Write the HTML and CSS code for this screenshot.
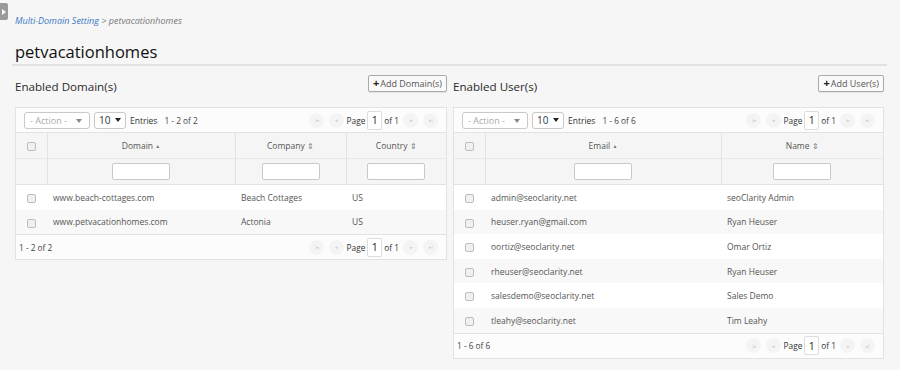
FILE: index.html
```html
<!DOCTYPE html>
<html lang="en">
<head>
    <meta charset="UTF-8">
    <meta name="viewport" content="width=device-width, initial-scale=1.0">
    <title>petvacationhomes</title>
    <link rel="stylesheet" href="styles.css">
</head>
<body>
    <div class="side-tab">
        <svg width="4" height="6" viewBox="0 0 4 6"><path d="M0 0 L4 3 L0 6 Z" fill="#fff"/></svg>
    </div>
    <div class="page">
        <div class="breadcrumb"><a href="#">Multi-Domain Setting</a> &gt; petvacationhomes</div>
        <h1 class="title">petvacationhomes</h1>

        <div class="columns">
            <!-- Domains -->
            <div class="section">
                <div class="section-head">
                    <h2>Enabled Domain(s)</h2>
                    <button class="add-btn"><span class="plus">+</span>Add Domain(s)</button>
                </div>
                <div class="panel">
                    <div class="toolbar">
                        <div class="select action">- Action -<span class="caret thin"></span></div>
                        <div class="select size">10<span class="caret"></span></div>
                        <span class="lbl entries">Entries</span>
                        <span class="lbl count">1 - 2 of 2</span>
                        <div class="pager">
                            <span class="pg">|&#9666;</span>
                            <span class="pg">&#9666;</span>
                            <span class="lbl pg-page">Page</span>
                            <span class="page-input">1</span>
                            <span class="lbl pg-of">of 1</span>
                            <span class="pg">&#9656;</span>
                            <span class="pg">&#9656;|</span>
                        </div>
                    </div>
                    <table class="grid">
                        <colgroup>
                            <col class="c-check">
                            <col style="width: 188px">
                            <col style="width: 111px">
                            <col>
                        </colgroup>
                        <thead>
                            <tr class="head-row">
                                <th><span class="cb"></span></th>
                                <th>Domain <span class="sort">&#9650;</span></th>
                                <th>Company <span class="sort both">&#8661;</span></th>
                                <th>Country <span class="sort both">&#8661;</span></th>
                            </tr>
                            <tr class="filter-row">
                                <th></th>
                                <th><span class="filter"></span></th>
                                <th><span class="filter"></span></th>
                                <th><span class="filter"></span></th>
                            </tr>
                        </thead>
                        <tbody>
                            <tr>
                                <td class="chk"><span class="cb"></span></td>
                                <td>www.beach-cottages.com</td>
                                <td>Beach Cottages</td>
                                <td>US</td>
                            </tr>
                            <tr>
                                <td class="chk"><span class="cb"></span></td>
                                <td>www.petvacationhomes.com</td>
                                <td>Actonia</td>
                                <td>US</td>
                            </tr>
                        </tbody>
                    </table>
                    <div class="toolbar footer">
                        <span class="lbl count">1 - 2 of 2</span>
                        <div class="pager">
                            <span class="pg">|&#9666;</span>
                            <span class="pg">&#9666;</span>
                            <span class="lbl pg-page">Page</span>
                            <span class="page-input">1</span>
                            <span class="lbl pg-of">of 1</span>
                            <span class="pg">&#9656;</span>
                            <span class="pg">&#9656;|</span>
                        </div>
                    </div>
                </div>
            </div>

            <!-- Users -->
            <div class="section">
                <div class="section-head">
                    <h2>Enabled User(s)</h2>
                    <button class="add-btn"><span class="plus">+</span>Add User(s)</button>
                </div>
                <div class="panel">
                    <div class="toolbar">
                        <div class="select action">- Action -<span class="caret thin"></span></div>
                        <div class="select size">10<span class="caret"></span></div>
                        <span class="lbl entries">Entries</span>
                        <span class="lbl count">1 - 6 of 6</span>
                        <div class="pager">
                            <span class="pg">|&#9666;</span>
                            <span class="pg">&#9666;</span>
                            <span class="lbl pg-page">Page</span>
                            <span class="page-input">1</span>
                            <span class="lbl pg-of">of 1</span>
                            <span class="pg">&#9656;</span>
                            <span class="pg">&#9656;|</span>
                        </div>
                    </div>
                    <table class="grid">
                        <colgroup>
                            <col class="c-check">
                            <col style="width: 236px">
                            <col>
                        </colgroup>
                        <thead>
                            <tr class="head-row">
                                <th><span class="cb"></span></th>
                                <th>Email <span class="sort">&#9650;</span></th>
                                <th>Name <span class="sort both">&#8661;</span></th>
                            </tr>
                            <tr class="filter-row">
                                <th></th>
                                <th><span class="filter"></span></th>
                                <th><span class="filter"></span></th>
                            </tr>
                        </thead>
                        <tbody>
                            <tr><td class="chk"><span class="cb"></span></td><td>admin@seoclarity.net</td><td>seoClarity Admin</td></tr>
                            <tr><td class="chk"><span class="cb"></span></td><td>heuser.ryan@gmail.com</td><td>Ryan Heuser</td></tr>
                            <tr><td class="chk"><span class="cb"></span></td><td>oortiz@seoclarity.net</td><td>Omar Ortiz</td></tr>
                            <tr><td class="chk"><span class="cb"></span></td><td>rheuser@seoclarity.net</td><td>Ryan Heuser</td></tr>
                            <tr><td class="chk"><span class="cb"></span></td><td>salesdemo@seoclarity.net</td><td>Sales Demo</td></tr>
                            <tr><td class="chk"><span class="cb"></span></td><td>tleahy@seoclarity.net</td><td>Tim Leahy</td></tr>
                        </tbody>
                    </table>
                    <div class="toolbar footer">
                        <span class="lbl count">1 - 6 of 6</span>
                        <div class="pager">
                            <span class="pg">|&#9666;</span>
                            <span class="pg">&#9666;</span>
                            <span class="lbl pg-page">Page</span>
                            <span class="page-input">1</span>
                            <span class="lbl pg-of">of 1</span>
                            <span class="pg">&#9656;</span>
                            <span class="pg">&#9656;|</span>
                        </div>
                    </div>
                </div>
            </div>
        </div>
    </div>
</body>
</html>
```

FILE: styles.css
```css
body {
    margin: 0;
    background-color: #f6f6f6;
    font-family: "Open Sans", Arial, sans-serif;
    color: #555;
}

.side-tab {
    position: absolute;
    left: 0;
    top: 3px;
    width: 8px;
    height: 17px;
    background: #9a9a9a;
    border-radius: 0 2px 2px 0;
    display: flex;
    align-items: center;
    justify-content: center;
}

.page {
    padding: 14px 16px 0 15px;
}

.breadcrumb {
    font-size: 9px;
    font-style: italic;
    color: #777;
    line-height: 14px;
}

.breadcrumb a {
    color: #3a76c4;
    text-decoration: none;
}

.title {
    font-size: 16.5px;
    font-weight: 400;
    color: #111;
    margin: 13px -3px 0 -3px;
    padding: 0 0 1px 3px;
    line-height: 22px;
    border-bottom: 2px solid #e2e2e2;
}

.columns {
    display: flex;
    gap: 6px;
    margin-top: 9px;
}

.section {
    display: flex;
    flex-direction: column;
}

.section:first-child {
    width: 432px;
}

.section:last-child {
    width: 431px;
}

.section-head {
    display: flex;
    justify-content: space-between;
    align-items: flex-start;
    height: 32px;
}

.section-head h2 {
    margin: 3px 0 0 0;
    font-size: 11.6px;
    line-height: 18px;
    font-weight: 400;
    color: #2a2a2a;
}

.add-btn {
    font-family: "Open Sans", Arial, sans-serif;
    font-size: 9px;
    color: #555;
    background: #fafafa;
    border: 1px solid #aaa;
    border-radius: 2px;
    padding: 1px 4px 2px 4px;
    height: 17px;
    line-height: 12px;
    margin-top: 0;
    box-shadow: 0 1px 1px rgba(0, 0, 0, 0.08);
}

.plus {
    font-weight: 700;
    font-size: 11px;
    color: #222;
    margin-right: 1px;
}

.panel {
    background: #fff;
    border: 1px solid #e2e2e2;
}

.toolbar {
    display: flex;
    align-items: center;
    height: 24px;
    padding: 0 8px;
    background: #fcfcfc;
    font-size: 8px;
}

.toolbar.footer {
    height: 24px;
    padding-left: 3px;
    border-top: 1px solid #e2e2e2;
}

.select {
    position: relative;
    height: 17px;
    border: 1px solid #c9c9c9;
    border-radius: 3px;
    box-sizing: border-box;
    display: flex;
    align-items: center;
    background: #fff;
}

.select.action {
    width: 66px;
    padding-left: 5px;
    color: #aaa;
    font-size: 9px;
}

.select.size {
    width: 32px;
    margin-left: 4px;
    padding-left: 4px;
    color: #333;
    font-size: 10px;
}

.caret {
    position: absolute;
    right: 4px;
    top: 5px;
    width: 0;
    height: 0;
    border-left: 3px solid transparent;
    border-right: 3px solid transparent;
    border-top: 4px solid #222;
}

.caret.thin {
    right: 7px;
    top: 6px;
    border-top-color: #888;
}

.lbl {
    color: #444;
    margin-left: 4px;
    font-size: 8px;
}

.entries {
    color: #333;
    font-size: 8.5px;
}

.count {
    margin-left: 7px;
    font-size: 8.3px;
}

.footer .count {
    margin-left: 0;
}

.pager {
    margin-left: auto;
    display: flex;
    align-items: center;
}

.pg {
    width: 15px;
    height: 15px;
    border-radius: 50%;
    background: #f4f4f4;
    color: #ccc;
    font-size: 5px;
    display: flex;
    align-items: center;
    justify-content: center;
    margin-left: 5px;
    letter-spacing: -1px;
}

.pg:first-child {
    margin-left: 0;
}

.pager .lbl {
    font-size: 8.3px;
    color: #333;
}

.pager .pg-page {
    margin: 0 2px 0 3px;
}

.pager .pg-of {
    margin: 0 -1px 0 2px;
}

.page-input {
    width: 15px;
    height: 19px;
    box-sizing: border-box;
    border: 1px solid #ddd;
    border-radius: 2px;
    display: flex;
    align-items: center;
    justify-content: center;
    color: #222;
    font-size: 10.5px;
    background: #fff;
}

.grid {
    width: 100%;
    border-collapse: collapse;
    table-layout: fixed;
    font-size: 8.5px;
}

.grid th {
    padding: 0;
}

.c-check {
    width: 31px;
}

.head-row th {
    height: 25px;
    background: #f5f5f5;
    font-weight: 400;
    color: #555;
    border-top: 1px solid #e2e2e2;
    border-left: 1px solid #e2e2e2;
    font-size: 8.5px;
}

.head-row th:first-child,
.filter-row th:first-child {
    border-left: none;
}

.filter-row th {
    height: 25px;
    background: #f5f5f5;
    border-top: 1px solid #e8e8e8;
    border-left: 1px solid #e2e2e2;
    border-bottom: 1px solid #e2e2e2;
    line-height: 0;
}

.sort {
    font-size: 5px;
    color: #777;
    vertical-align: 1px;
}

.sort.both {
    font-size: 8px;
    vertical-align: 0;
}

.filter {
    display: inline-block;
    width: 56px;
    height: 15px;
    border: 1px solid #c9c9c9;
    border-radius: 2px;
    background: #fff;
    vertical-align: middle;
}

.cb {
    display: inline-block;
    width: 7px;
    height: 7px;
    border: 1px solid #bdbdbd;
    border-radius: 2px;
    background: #f0f0f0;
    vertical-align: middle;
}

.grid td {
    height: 24.6px;
    padding: 0 0 0 6px;
    color: #555;
}

.grid td.chk {
    text-align: center;
    padding: 0;
}

.grid tbody tr:nth-child(even) td {
    background: #f8f8f8;
}
```
